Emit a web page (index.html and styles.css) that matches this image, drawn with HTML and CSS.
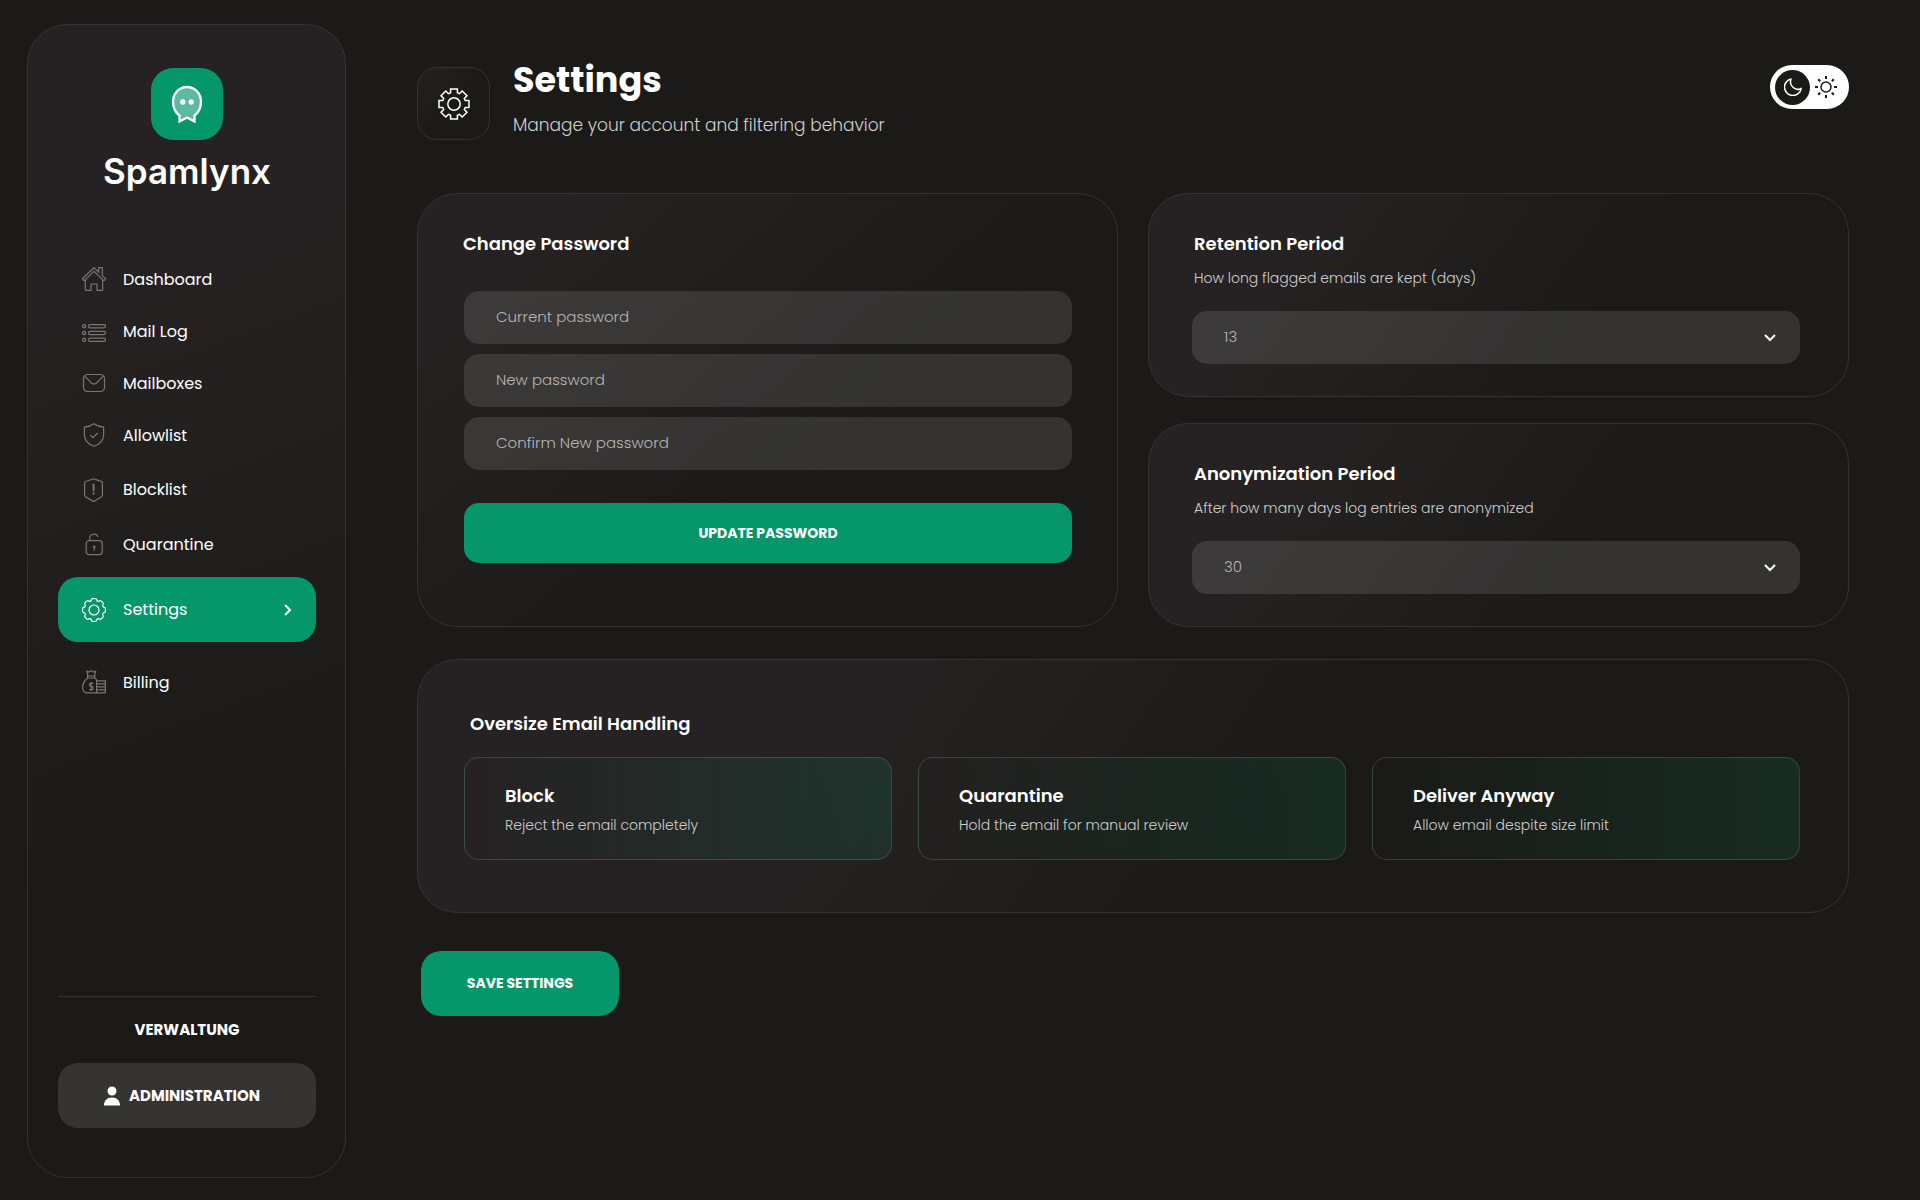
FILE: index.html
```html
<!DOCTYPE html>
<html lang="en">
<head>
    <meta charset="UTF-8">
    <meta name="viewport" content="width=device-width, initial-scale=1.0">
    <title>Spamlynx - Settings</title>
    <link rel="stylesheet" href="styles.css">
</head>
<body>
    <div class="layout">
        <aside class="sidebar">
            <div class="brand">
                <div class="brand-logo">
                    <svg width="32" height="38" viewBox="0 0 32 38">
                        <path d="M8.500 30.500C4.500 27.500 2 22.500 2 17 2 8.500 8 2 16 2s14 6.500 14 15c0 5.500-2.500 10.500-6.500 13.500v6L16 32.500 8.500 36.500z" fill="#fff" fill-opacity=".35" stroke="#fff" stroke-width="2.300"/>
                        <circle cx="11.800" cy="17" r="2.700" fill="#fff"/>
                        <circle cx="20.200" cy="17" r="2.700" fill="#fff"/>
                    </svg>
                </div>
                <span class="brand-name">Spamlynx</span>
            </div>

            <nav class="nav">
                <a class="nav-item" href="#">
                    <svg class="icon" viewBox="0 0 24 24"><path d="M12 .7L.9 11.200a1 1 0 0 0 0 1.400l.5.5a1 1 0 0 0 1.400 0L12 4.300l9.200 8.800a1 1 0 0 0 1.400 0l.5-.5a1 1 0 0 0 0-1.400L20.300 8.600V.7h-3.600v4.500zM3.300 12.800v9.700a.9.9 0 0 0 .9.9H9V17h6v6.400h4.800a.9.9 0 0 0 .9-.9v-9.700"/></svg>
                    Dashboard
                </a>
                <a class="nav-item" href="#">
                    <svg class="icon" viewBox="0 0 24 24"><circle cx="2.200" cy="7.200" r="1.600"/><circle cx="2.200" cy="14" r="1.600"/><circle cx="2.200" cy="20.800" r="1.600"/><rect x="6.500" y="5.600" width="17" height="3.200" rx="1.600"/><rect x="6.500" y="12.400" width="17" height="3.200" rx="1.600"/><rect x="6.500" y="19.200" width="17" height="3.200" rx="1.600"/></svg>
                    Mail Log
                </a>
                <a class="nav-item" href="#">
                    <svg class="icon" viewBox="0 0 24 24"><rect x="1.500" y="3.500" width="21" height="17" rx="4"/><path d="M2.600 4.800l6.600 7q2.800 2.600 5.600 0l6.600-7"/></svg>
                    Mailboxes
                </a>
                <a class="nav-item" href="#">
                    <svg class="icon" viewBox="0 0 24 24"><path d="M12 .8C9.200 2.900 6 3.900 2.400 4.200V12c0 5.400 3.600 9.200 9.600 11.300 6-2.100 9.600-5.900 9.600-11.300V4.200C18 3.900 14.800 2.900 12 .8zM8.300 12l2.700 2.700 4.700-4.700"/></svg>
                    Allowlist
                </a>
                <div class="nav-group">
                    <a class="nav-item" href="#">
                        <svg class="icon" viewBox="0 0 24 24"><path d="M11.700.8C9 1.900 6 2.900 3.400 3.500q-.8.2-.8 1v12.300q0 1.400 1.200 2.100l7.200 4.200q.8.400 1.600 0l6.600-4.200q1.200-.7 1.200-2.100V4.500q0-.8-.8-1C17 2.900 14.300 1.900 11.700.8z"/><path d="M11.600 6.500v6M11.600 15.200v.6" stroke-width="2" stroke-linecap="round"/></svg>
                        Blocklist
                    </a>
                    <a class="nav-item" href="#">
                        <svg class="icon" viewBox="0 0 24 24"><rect x="4.200" y="7.700" width="16" height="14" rx="3"/><path d="M7.700 7.700V5.300a4.200 4.200 0 0 1 8.100-1.500M12.200 13.500v4"/><circle cx="12.200" cy="13.800" r=".8"/></svg>
                        Quarantine
                    </a>
                </div>
                <a class="nav-item active" href="#" aria-current="page">
                    <svg class="icon" viewBox="-12 -12 24 24"><path d="M1.500-11.400Q2.600-11.400 2.800-9.600 3.500-8.400 4.800-8.800 6.200-9.900 7-9.100L9.100-7Q9.900-6.200 8.800-4.800 8.400-3.500 9.600-2.800 11.400-2.600 11.400-1.500V1.500Q11.400 2.600 9.600 2.800 8.400 3.500 8.800 4.800 9.900 6.200 9.100 7L7 9.100Q6.200 9.900 4.800 8.800 3.500 8.400 2.800 9.600 2.600 11.400 1.500 11.400H-1.500Q-2.600 11.400-2.800 9.600-3.500 8.400-4.800 8.800-6.200 9.900-7 9.100L-9.100 7Q-9.900 6.200-8.800 4.800-8.400 3.500-9.600 2.800-11.400 2.600-11.400 1.500V-1.500Q-11.400-2.600-9.600-2.800-8.400-3.500-8.800-4.800-9.900-6.200-9.100-7L-7-9.100Q-6.200-9.900-4.800-8.800-3.500-8.400-2.800-9.600-2.600-11.400-1.500-11.400Z"/><circle r="5"/></svg>
                    Settings
                    <svg class="arrow" width="8" height="12" viewBox="0 0 8 12"><path d="M1 1l5 5-5 5" fill="none" stroke="currentColor" stroke-width="2"/></svg>
                </a>
                <a class="nav-item" href="#">
                    <svg class="icon" viewBox="0 0 24 24"><path d="M6 6L4.800 1.300l2.200.8L9.200.6l2.200 1.500 2.200-.8L12.400 6M5.500 6h7.400v2H5.500zM6 8C2.500 10.300.7 14 .7 17.700c0 3.400 1.600 5.200 4.600 5.200h9M12.400 8q1.800 1 2.800 2.700"/><path d="M11.200 13.800q-2-1.400-3.600 0c-1 1.600.6 2.200 1.600 2.600 1.600.4 2.600 1.600 1.600 2.800q-1.600 1.200-3.600 0M9.200 12v9"/><path d="M14.600 10.900h8.800v3h-8.800zM14.600 13.900h8.800v3h-8.800zM14.600 16.900h8.800v3h-8.800zM14.600 19.900h8.800v3h-8.800z"/></svg>
                    Billing
                </a>
            </nav>

            <div class="sidebar-footer">
                <div class="footer-title">VERWALTUNG</div>
                <button class="admin-btn" type="button">
                    <svg width="16" height="20" viewBox="0 0 16 20" fill="currentColor"><circle cx="8" cy="5" r="4.500"/><path d="M0 19.500c0-5 3-8 8-8s8 3 8 8z"/></svg>
                    ADMINISTRATION
                </button>
            </div>
        </aside>

        <main class="main">
            <header class="page-header">
                <div class="header-icon">
                    <svg width="32" height="32" viewBox="-16 -16 32 32" fill="none" stroke="currentColor" stroke-width="1.500"><path d="M-3.400-15H3.400V-11.200L5.500-10.300 8.200-13 13-8.200 10.300-5.500 11.200-3.400H15V3.400H11.200L10.300 5.500 13 8.200 8.200 13 5.500 10.300 3.400 11.200V15H-3.400V11.200L-5.500 10.300-8.200 13-13 8.200-10.300 5.500-11.200 3.400H-15V-3.400H-11.200L-10.300-5.500-13-8.200-8.200-13-5.500-10.300-3.400-11.200Z"/><circle r="6.200"/></svg>
                </div>
                <div class="header-text">
                    <h1>Settings</h1>
                    <p>Manage your account and filtering behavior</p>
                </div>
                <button class="theme-toggle" type="button" aria-label="Toggle theme">
                    <span class="toggle-knob">
                        <svg width="18" height="18" viewBox="0 0 18 18" fill="none" stroke="#fff" stroke-width="1.500" stroke-linejoin="round"><path d="M7 .9A8.400 8.400 0 1 0 17.200 10.300C12 13.500 4.500 8 7 .9z"/></svg>
                    </span>
                    <svg width="22" height="22" viewBox="-11 -11 22 22" fill="none" stroke="#1b1a18" stroke-width="2"><circle r="5" stroke-width="1.500"/><path d="M0-11v3M0 8v3M-11 0h3M8 0h3M-7.800-7.800l2 2M5.800 5.800l2 2M-7.800 7.800l2-2M5.800-5.800l2-2"/></svg>
                </button>
            </header>

            <div class="cards">
                <section class="card password-card">
                    <h2>Change Password</h2>
                    <form class="password-form">
                        <input class="field" type="password" placeholder="Current password" aria-label="Current password">
                        <input class="field" type="password" placeholder="New password" aria-label="New password">
                        <input class="field" type="password" placeholder="Confirm New password" aria-label="Confirm New password">
                        <button class="btn update-btn" type="button">UPDATE PASSWORD</button>
                    </form>
                </section>

                <div class="card-stack">
                    <section class="card period-card">
                        <h2><label for="retention">Retention Period</label></h2>
                        <p>How long flagged emails are kept (days)</p>
                        <div class="select-wrap">
                            <select class="field" id="retention">
                                <option>13</option>
                            </select>
                            <svg class="chevron" width="12" height="8" viewBox="0 0 12 8"><path d="M1 1l5 5 5-5" fill="none" stroke="#fff" stroke-width="2"/></svg>
                        </div>
                    </section>
                    <section class="card period-card">
                        <h2><label for="anonymization">Anonymization Period</label></h2>
                        <p>After how many days log entries are anonymized</p>
                        <div class="select-wrap">
                            <select class="field" id="anonymization">
                                <option>30</option>
                            </select>
                            <svg class="chevron" width="12" height="8" viewBox="0 0 12 8"><path d="M1 1l5 5 5-5" fill="none" stroke="#fff" stroke-width="2"/></svg>
                        </div>
                    </section>
                </div>
            </div>

            <section class="card oversize-card">
                <h2>Oversize Email Handling</h2>
                <div class="options">
                    <label class="option">
                        <input type="radio" name="oversize" value="block">
                        <span class="option-title">Block</span>
                        <span class="option-text">Reject the email completely</span>
                    </label>
                    <label class="option">
                        <input type="radio" name="oversize" value="quarantine">
                        <span class="option-title">Quarantine</span>
                        <span class="option-text">Hold the email for manual review</span>
                    </label>
                    <label class="option">
                        <input type="radio" name="oversize" value="deliver">
                        <span class="option-title">Deliver Anyway</span>
                        <span class="option-text">Allow email despite size limit</span>
                    </label>
                </div>
            </section>

            <button class="btn save-btn" type="button">SAVE SETTINGS</button>
        </main>
    </div>
</body>
</html>
```
FILE: styles.css
```css
:root {
    --green: #059669;
    --background: #1b1a18;
    --card: #262223;
    --text: #ffffff;
    --muted: #cfcecd;
    --placeholder: #b6b5b4;
    --border: #343332;
}

* {
    box-sizing: border-box;
}

body {
    font-family: Poppins, Inter, sans-serif;
    font-size: 16px;
    background: var(--background);
    color: var(--text);
    margin: 0;
}

h1, h2, p {
    margin: 0;
}

button, input, select {
    font-family: inherit;
    color: inherit;
    border: none;
}

button {
    cursor: pointer;
}

.layout {
    display: flex;
    min-height: 100vh;
    padding: 24px 0 22px 27px;
}

/* Sidebar */
.sidebar {
    width: 319px;
    flex-shrink: 0;
    display: flex;
    flex-direction: column;
    padding: 43px 29px 49px 30px;
    border: 1px solid var(--border);
    border-radius: 40px;
    background: linear-gradient(160deg, var(--card) 20%, var(--background) 70%);
}

.brand {
    display: flex;
    flex-direction: column;
    align-items: center;
    gap: 8px;
    margin-bottom: 57px;
}

.brand-logo {
    display: flex;
    align-items: center;
    justify-content: center;
    width: 72px;
    height: 72px;
    border-radius: 22px;
    background: var(--green);
}

.brand-name {
    font-family: Inter, sans-serif;
    font-size: 35px;
    font-weight: 600;
    line-height: 46px;
    margin-bottom: 2px;
}

.nav-item {
    display: flex;
    align-items: center;
    gap: 17px;
    height: 52px;
    padding: 0 24px;
    color: var(--text);
    text-decoration: none;
}

.nav-group {
    padding-top: 1px;
}

.nav-group .nav-item {
    height: 55px;
}

.icon {
    width: 24px;
    height: 24px;
    fill: none;
    stroke: #777675;
    stroke-width: 1.2;
}

.nav-item.active {
    height: 65px;
    margin: 5px 0 14px;
    border-radius: 20px;
    background: var(--green);
}

.active .icon {
    stroke: var(--text);
}

.arrow {
    margin-left: auto;
}

.sidebar-footer {
    margin-top: auto;
    padding-top: 21px;
    border-top: 1px solid var(--border);
    text-align: center;
}

.footer-title {
    font-size: 15px;
    font-weight: 700;
    line-height: 24px;
    margin-bottom: 21px;
}

.admin-btn {
    display: flex;
    align-items: center;
    justify-content: center;
    gap: 9px;
    width: 100%;
    height: 65px;
    padding-right: 16px;
    border-radius: 20px;
    background: #353432;
    font-size: 15px;
    font-weight: 700;
}

/* Header */
.main {
    flex: 1;
    padding: 32px 71px 0;
}

.page-header {
    display: flex;
    align-items: flex-end;
    margin-bottom: 53px;
}

.header-icon {
    display: flex;
    align-items: center;
    justify-content: center;
    width: 73px;
    height: 73px;
    border: 1px solid var(--border);
    border-radius: 20px;
    background: linear-gradient(135deg, #232021, var(--background) 60%);
}

.header-text {
    margin-left: 23px;
}

h1 {
    font-size: 35px;
    font-weight: 700;
    line-height: 48px;
}

.header-text p {
    margin-top: 6px;
    font-size: 17px;
    font-weight: 300;
    line-height: 30px;
    color: var(--muted);
}

.theme-toggle {
    display: flex;
    align-items: center;
    align-self: flex-start;
    gap: 5px;
    width: 79px;
    height: 44px;
    margin: 9px 0 0 auto;
    padding: 0 5px;
    border-radius: 22px;
    background: #fff;
}

.toggle-knob {
    display: flex;
    align-items: center;
    justify-content: center;
    width: 35px;
    height: 35px;
    border-radius: 50%;
    background: var(--background);
}

/* Cards */
.cards {
    display: grid;
    grid-template-columns: 1fr 1fr;
    gap: 30px;
}

.card-stack {
    display: flex;
    flex-direction: column;
    gap: 26px;
}

.card {
    border: 1px solid var(--border);
    border-radius: 40px;
    background: linear-gradient(125deg, var(--card) 20%, var(--background) 65%);
}

h2 {
    font-size: 18px;
    font-weight: 600;
    line-height: 28px;
}

.password-card {
    padding: 36px 45px 63px;
    background: linear-gradient(140deg, var(--card) 12%, var(--background) 60%);
}

.password-form {
    display: flex;
    flex-direction: column;
    gap: 10px;
    margin-top: 33px;
    padding-left: 1px;
}

.field {
    width: 100%;
    height: 53px;
    padding: 0 32px 2px;
    border-radius: 15px;
    background: rgba(255, 255, 255, 0.11);
    font-size: 15px;
    font-weight: 300;
}

.field::placeholder {
    color: var(--placeholder);
    opacity: 1;
}

.btn {
    border-radius: 20px;
    background: var(--green);
    font-size: 14px;
    font-weight: 700;
}

.update-btn {
    height: 60px;
    margin-top: 23px;
    border-radius: 15px;
}

.period-card {
    padding: 36px 48px 32px 43px;
}

.period-card h2,
.period-card p {
    padding-left: 2px;
}

.period-card p {
    margin: 8px 0 21px;
    font-size: 14px;
    font-weight: 300;
    line-height: 24px;
    color: var(--muted);
}

.select-wrap {
    position: relative;
}

select.field {
    display: block;
    appearance: none;
    color: var(--placeholder);
}

.chevron {
    position: absolute;
    top: 50%;
    right: 24px;
    margin-top: -4px;
    pointer-events: none;
}

.oversize-card {
    margin-top: 32px;
    padding: 50px 48px 52px 46px;
    background: linear-gradient(125deg, var(--card) 30%, var(--background) 60%);
}

.oversize-card h2 {
    padding-left: 6px;
}

.options {
    display: grid;
    grid-template-columns: repeat(3, 1fr);
    gap: 26px;
    margin-top: 19px;
}

.option {
    position: relative;
    display: flex;
    flex-direction: column;
    gap: 3px;
    padding: 24px 40px 22px;
    border: 1px solid rgba(255, 255, 255, 0.14);
    border-radius: 15px;
    background: linear-gradient(90deg, rgba(5, 150, 105, 0), rgba(5, 150, 105, 0.15));
    cursor: pointer;
}

.option input {
    position: absolute;
    opacity: 0;
}

.option-title {
    font-size: 18px;
    font-weight: 600;
    line-height: 28px;
}

.option-text {
    font-size: 14px;
    font-weight: 300;
    line-height: 24px;
    color: var(--muted);
}

.save-btn {
    width: 198px;
    height: 65px;
    margin: 38px 0 0 4px;
}
```
